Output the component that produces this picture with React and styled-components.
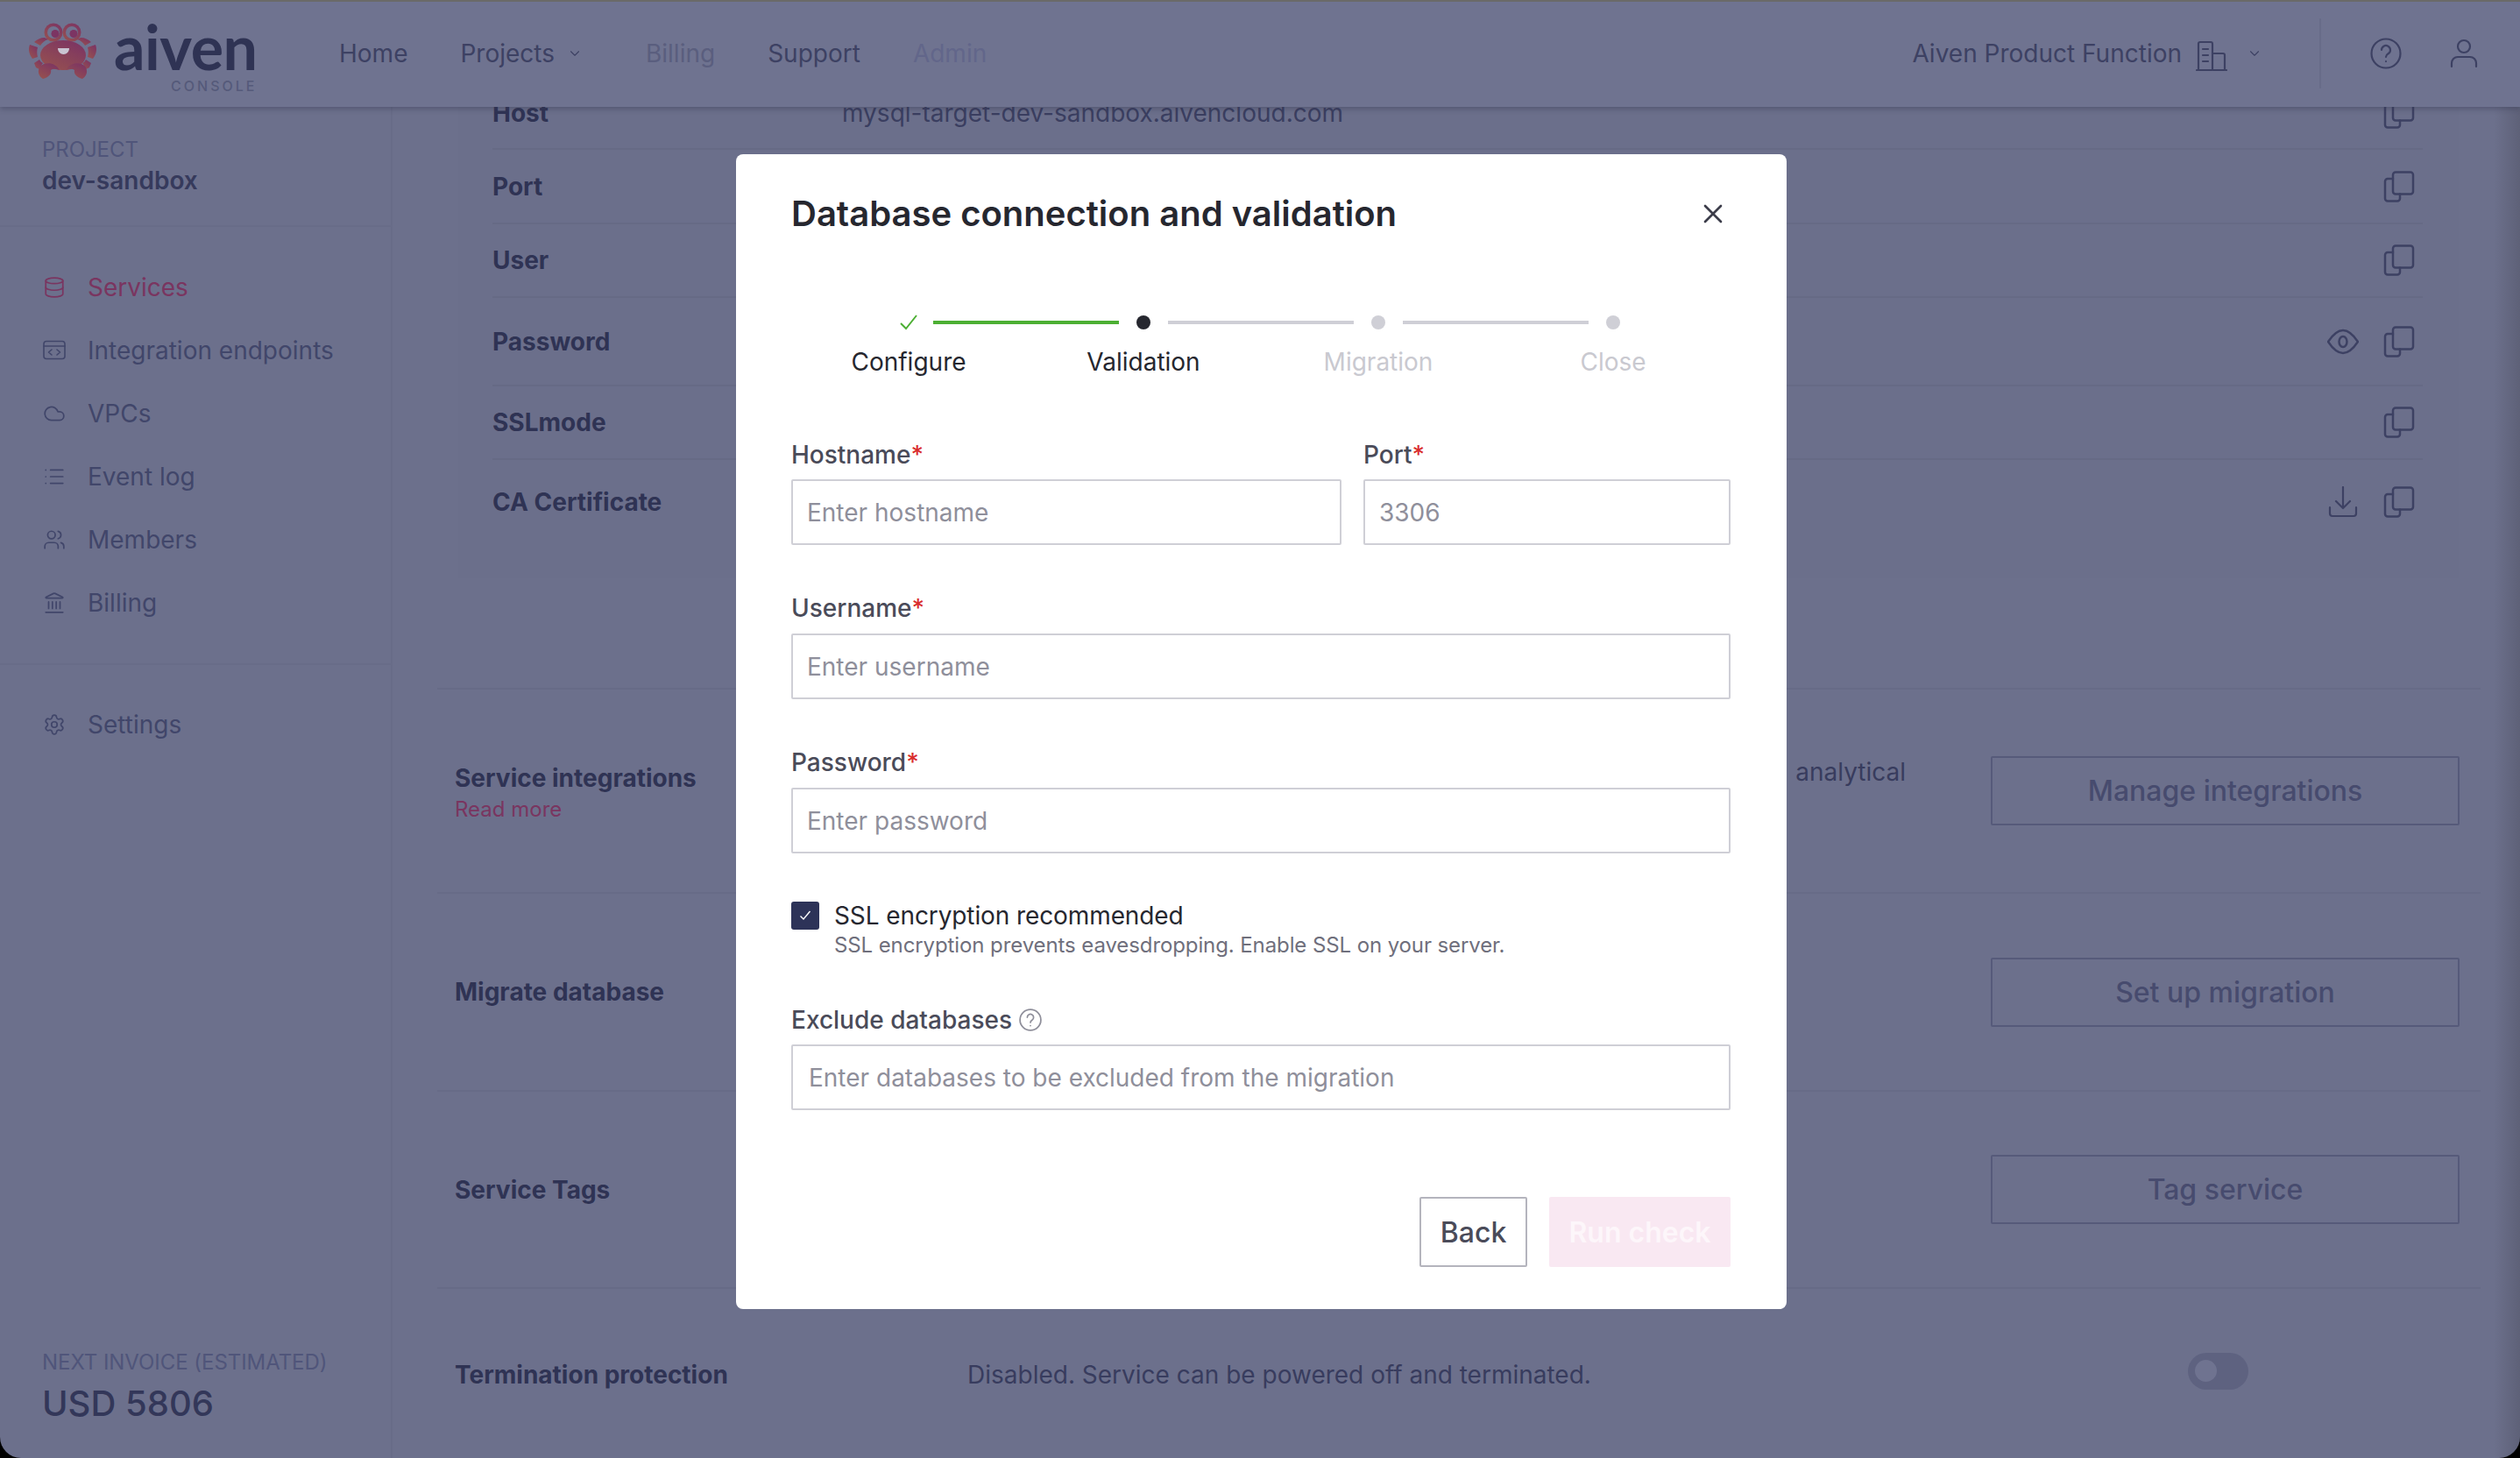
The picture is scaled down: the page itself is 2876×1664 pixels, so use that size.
import React from 'react';
import styled, { createGlobalStyle } from 'styled-components';
import { ChevronDown, Cloud, Database, Landmark, List, Settings, Users, X } from 'lucide-react';

const GlobalStyle = createGlobalStyle`
  html, body {
    margin: 0;
    padding: 0;
    background: #000;
  }
  body {
    font-family: "Inter", "Liberation Sans", sans-serif;
    color: #3a3e60;
  }
  * {
    box-sizing: border-box;
  }
`;

const Shell = styled.div`
  position: relative;
  width: 2876px;
  height: 1664px;
  overflow: hidden;
  display: flex;
  flex-direction: column;
  background: #6c708c;
  border-top: 2px solid #6a6a68;
  border-radius: 0 0 24px 24px;

  &::after {
    content: '';
    position: absolute;
    top: 0;
    right: 0;
    bottom: 0;
    width: 30px;
    background: linear-gradient(to right, rgba(80, 82, 100, 0), rgba(80, 82, 100, 0.5));
    pointer-events: none;
  }
`;

const TopBar = styled.header`
  position: relative;
  z-index: 2;
  flex: none;
  height: 120px;
  display: flex;
  align-items: center;
  padding: 0 47px 0 34px;
  background: #6f7390;
  box-shadow: 0 2px 6px rgba(50, 54, 80, 0.45);
`;

const Logo = styled.div`
  display: flex;
  align-items: flex-start;
  width: 353px;
  height: 100%;
`;

const CrabMark = styled.svg`
  margin: 22px 0 0 -4px;
`;

const Wordmark = styled.div`
  display: flex;
  flex-direction: column;
  align-items: flex-end;
  margin: 15px 0 0 16px;
  color: #2f3354;
`;

const WordmarkName = styled.span`
  font-family: "Lato", sans-serif;
  font-size: 70px;
  font-weight: 700;
  line-height: 72px;
  letter-spacing: -0.5px;
`;

const WordmarkSub = styled.span`
  font-size: 16px;
  font-weight: 500;
  line-height: 18px;
  letter-spacing: 3px;
  color: #555a7a;
`;

const TopNav = styled.nav`
  display: flex;
  align-items: center;
  flex: 1;
  margin-top: -2px;
`;

const TopLink = styled.a`
  display: flex;
  align-items: center;
  gap: 14px;
  margin-right: ${(p) => p.$gap}px;
  font-size: 28px;
  line-height: 36px;
  color: ${(p) => p.$color || '#3d4163'};
`;

const TopRight = styled.div`
  display: flex;
  align-items: center;
  height: 100%;
  margin-top: -2px;
  color: #3d4163;
`;

const OrgName = styled.span`
  font-size: 28px;
  line-height: 36px;
`;

const OrgIcon = styled.span`
  display: flex;
  margin: 6px 22px 0 16px;
`;

const TopDivider = styled.span`
  width: 2px;
  height: 80px;
  margin: 0 56px 0 65px;
  background: #686c89;
`;

const UserIcon = styled.span`
  display: flex;
  margin-left: 54px;
`;

const Body = styled.div`
  flex: 1;
  display: flex;
  min-height: 0;
`;

const Sidebar = styled.aside`
  flex: none;
  width: 448px;
  display: flex;
  flex-direction: column;
  border-right: 2px solid #686c88;
`;

const ProjectBlock = styled.div`
  height: 137px;
  padding: 32px 48px 0;
  border-bottom: 2px solid #686c88;
`;

const SmallCaps = styled.div`
  font-size: 24px;
  line-height: 34px;
  letter-spacing: -0.05px;
  color: #50557a;
`;

const ProjectName = styled.div`
  font-size: 28px;
  font-weight: 600;
  line-height: 36px;
  color: #363a5c;
`;

const SideGroup = styled.div`
  padding: ${(p) => p.$padding};
  border-bottom: ${(p) => (p.$divided ? '2px solid #686c88' : 'none')};
`;

const SideItem = styled.a`
  display: flex;
  align-items: center;
  gap: 25px;
  height: 72px;
  padding-left: 49px;
  font-size: 28px;
  color: ${(p) => (p.$active ? '#7a3560' : '#41466a')};
`;

const SideFooter = styled.div`
  margin-top: auto;
  padding: 0 48px 36px;
`;

const InvoiceAmount = styled.div`
  margin-top: 4px;
  font-size: 40px;
  font-weight: 500;
  line-height: 52px;
  color: #333759;
`;

const Main = styled.main`
  flex: 1;
  min-width: 0;
  overflow: hidden;
  padding: 0 45px 0 51px;
`;

const ConnectionCard = styled.section`
  margin: -34px 25px 125px 24px;
  padding: 0 41px 40px 39px;
  background: #6b6f8b;
`;

const ConnectionRow = styled.div`
  display: flex;
  align-items: center;
  height: ${(p) => p.$height}px;
  border-bottom: ${(p) => (p.$last ? 'none' : '2px solid #666a85')};
`;

const ConnectionLabel = styled.span`
  width: 399px;
  font-size: 28px;
  font-weight: 700;
  color: #2f3354;
`;

const ConnectionValue = styled.span`
  flex: 1;
  font-size: 28px;
  color: #3a3e60;
`;

const RowIcons = styled.span`
  display: flex;
  align-items: center;
  gap: 28px;
  margin-right: 9px;
  color: #3d4163;
`;

const Section = styled.section`
  display: flex;
  align-items: center;
  height: ${(p) => p.$height}px;
  padding: 0 24px 0 20px;
  border-top: ${(p) => (p.$first ? '2px solid #676b87' : 'none')};
  border-bottom: ${(p) => (p.$last ? 'none' : '2px solid #676b87')};
`;

const SectionTitleCol = styled.div`
  flex: none;
  width: 585px;
`;

const SectionTitle = styled.div`
  font-size: 28px;
  font-weight: 700;
  line-height: 36px;
  color: #2f3354;
`;

const ReadMore = styled.a`
  display: block;
  margin: 3px 0 -3px;
  font-size: 24px;
  line-height: 30px;
  color: #7a3560;
`;

const SectionText = styled.div`
  flex: 1;
  font-size: 28px;
  line-height: 36px;
  color: #383c5e;
  text-align: ${(p) => (p.$tail ? 'right' : 'left')};
  padding-right: ${(p) => (p.$tail ? '97px' : '0')};
  margin-bottom: ${(p) => (p.$tail ? '44px' : '0')};
`;

const SectionAction = styled.div`
  flex: none;
  width: 535px;
`;

const OutlineButton = styled.button`
  display: block;
  width: 100%;
  height: 79px;
  background: transparent;
  border: 2px solid #565a7a;
  border-radius: 2px;
  font-family: inherit;
  font-size: 32px;
  font-weight: 500;
  color: #474b6e;
`;

const Toggle = styled.span`
  display: block;
  width: 69px;
  height: 42px;
  margin: -8px 0 0 225px;
  padding: 8px;
  border-radius: 21px;
  background: #5e6280;

  &::before {
    content: '';
    display: block;
    width: 25px;
    height: 25px;
    border-radius: 50%;
    background: #6f7390;
  }
`;

const ModalLayer = styled.div`
  position: absolute;
  z-index: 3;
  inset: 0;
  display: flex;
  justify-content: center;
  align-items: flex-start;
  padding: 174px 1px 0 4px;
`;

const Modal = styled.div`
  width: 1199px;
  padding: 44px 64px 48px 63px;
  background: #fff;
  border-radius: 8px;
`;

const ModalHead = styled.div`
  display: flex;
  align-items: center;
  justify-content: space-between;
  margin-bottom: 92px;
`;

const ModalTitle = styled.h2`
  margin: 0;
  font-size: 40px;
  font-weight: 600;
  line-height: 48px;
  color: #26272f;
`;

const CloseButton = styled.span`
  display: flex;
  margin-right: 2px;
  color: #3c3d4a;
`;

const Stepper = styled.div`
  display: grid;
  grid-template-columns: repeat(4, 1fr);
  margin-bottom: 70px;
`;

const Step = styled.div`
  display: flex;
  flex-direction: column;
  align-items: center;
`;

const MarkerRow = styled.div`
  display: grid;
  grid-template-columns: 1fr 16px 1fr;
  grid-template-rows: 16px;
  column-gap: 20px;
  align-items: center;
  width: 100%;
  height: 16px;
`;

const Connector = styled.span`
  height: 4px;
  background: ${(p) => p.$color || 'transparent'};
`;

const Dot = styled.span`
  width: 16px;
  height: 16px;
  border-radius: 50%;
  background: ${(p) => p.$color};
`;

const StepCheck = styled.svg`
  width: 24px;
  height: 20px;
  margin: -2px 0 -2px -4px;
  color: #4caf33;
`;

const StepLabel = styled.div`
  margin-top: 19px;
  font-size: 28px;
  line-height: 36px;
  color: ${(p) => p.$color};
`;

const FieldRow = styled.div`
  display: flex;
  gap: 25px;
  margin-bottom: ${(p) => p.$gap}px;
`;

const Field = styled.div`
  flex: ${(p) => (p.$width ? 'none' : 1)};
  width: ${(p) => (p.$width ? `${p.$width}px` : 'auto')};
`;

const Label = styled.label`
  display: flex;
  align-items: center;
  gap: 8px;
  margin-bottom: ${(p) => p.$gap}px;
  font-size: 28px;
  font-weight: 500;
  line-height: 36px;
  color: #4a4b59;
`;

const Required = styled.span`
  margin-left: -8px;
  color: #d92d2d;
`;

const HintIcon = styled.span`
  display: flex;
  color: #8f8f9b;
`;

const Input = styled.input`
  display: block;
  width: 100%;
  height: 75px;
  padding: 0 ${(p) => p.$pad || 16}px;
  background: #fff;
  border: 2px solid #cfcfd6;
  border-radius: 2px;
  font-family: inherit;
  font-size: 28px;
  color: #26272f;

  &::placeholder {
    color: #8f8f9b;
    opacity: 1;
  }
`;

const CheckRow = styled.div`
  display: flex;
  gap: 17px;
  margin-bottom: 52px;
`;

const CheckBox = styled.span`
  flex: none;
  display: flex;
  align-items: center;
  justify-content: center;
  width: 32px;
  height: 32px;
  border-radius: 3px;
  background: #2d3358;
  color: #fff;
`;

const CheckTitle = styled.div`
  font-size: 28px;
  line-height: 32px;
  letter-spacing: -0.1px;
  color: #26272f;
`;

const CheckHint = styled.div`
  margin-top: 3px;
  font-size: 24px;
  line-height: 30px;
  letter-spacing: -0.1px;
  color: #6f6f7c;
`;

const ModalActions = styled.div`
  display: flex;
  justify-content: flex-end;
  gap: 25px;
  margin-top: 99px;
`;

const BackButton = styled.button`
  width: 123px;
  height: 80px;
  background: #fff;
  border: 2px solid #b4b4bd;
  border-radius: 2px;
  font-family: inherit;
  font-size: 32px;
  font-weight: 500;
  color: #4a4b59;
`;

const RunButton = styled.button`
  width: 207px;
  height: 80px;
  background: #f9e8f2;
  border: none;
  border-radius: 2px;
  font-family: inherit;
  font-size: 32px;
  font-weight: 600;
  color: #fdf6fa;
`;

const Glyph = ({ size = 36, stroke = 2.5, box = 36, children }) => (
  <svg width={size} height={size} viewBox={`0 0 ${box} ${box}`} fill="none" stroke="currentColor" strokeWidth={stroke} strokeLinecap="round" strokeLinejoin="round">
    {children}
  </svg>
);

const CopyIcon = () => (
  <Glyph>
    <rect x="11" y="1.5" width="23" height="25" rx="3" />
    <path d="M11 9H5a3 3 0 0 0-3 3v19.500a3 3 0 0 0 3 3h11a3 3 0 0 0 3-3V26.500" />
  </Glyph>
);

const EyeIcon = () => (
  <Glyph>
    <path d="M18 5c7 0 13 7 17 13-4 6-10 13-17 13S5 24 1 18C5 12 11 5 18 5Z" />
    <ellipse cx="18" cy="18" rx="4.5" ry="6" />
  </Glyph>
);

const DownloadIcon = () => (
  <Glyph stroke={2.2}>
    <path d="M18 1v24M10 17l8 8 8-8M3 24v7a3 3 0 0 0 3 3h24a3 3 0 0 0 3-3v-7" />
  </Glyph>
);

const EndpointIcon = () => (
  <Glyph size={26} box={26} stroke={1.6}>
    <rect x="1" y="2.5" width="24" height="20" rx="3" />
    <path d="M1 8h24M10 12l-3.500 3 3.500 3M16 12l3.500 3-3.500 3" />
  </Glyph>
);

const BuildingIcon = () => (
  <Glyph stroke={2.2}>
    <path d="M1 34h34M3 34V4a2 2 0 0 1 2-2h12a2 2 0 0 1 2 2v30M19 15h12a2 2 0 0 1 2 2v17M8 10h6M8 17h6M8 24h6" />
  </Glyph>
);

const HelpIcon = ({ size = 36, stroke = 2.2 }) => (
  <Glyph size={size} stroke={stroke}>
    <circle cx="18" cy="18" r="16.5" />
    <path d="M13 14a5 5 0 1 1 7.600 4.300c-1.600 1-2.600 2-2.600 3.700M18 27v.1" />
  </Glyph>
);

const PersonIcon = () => (
  <Glyph size={34} box={34} stroke={2.2}>
    <circle cx="17" cy="9" r="7" />
    <path d="M3 32v-4a7 7 0 0 1 7-7h14a7 7 0 0 1 7 7v4" />
  </Glyph>
);

const Crab = () => (
  <CrabMark width="84" height="68" viewBox="0 0 84 68">
    <defs>
      <linearGradient id="crabFill" x1="0.8" y1="0" x2="0.1" y2="1">
        <stop offset="0" stopColor="#7c3463" />
        <stop offset="1" stopColor="#97524f" />
      </linearGradient>
    </defs>
    <g fill="url(#crabFill)">
      <circle cx="31" cy="13" r="10.5" />
      <circle cx="52" cy="13" r="10.5" />
      <ellipse cx="42" cy="39" rx="26" ry="17" />
      <path d="M21 19c-5 0-9 2-12 5l7 4c2-3 5-6 9-7Z" />
      <path d="M62 19c5 0 9 2 12 5l-7 4c-2-3-5-6-9-7Z" />
      <path d="M4 27l9 3c-1 4-1 7 0 11l-6 2c-4-5-5-11-3-16Z" />
      <path d="M79 27l-9 3c1 4 1 7 0 11l6 2c4-5 5-11 3-16Z" />
      <path d="M9 48l6-4c1 2 2 3 4 4-2 2-3 5-2 8l-6-3Z" />
      <path d="M74 48l-6-4c-1 2-2 3-4 4 2 2 3 5 2 8l6-3Z" />
      <path d="M19 66C12 62 12 52 20 49c7-2 14 0 18 7-4-1-7-2-10 0 1 4-2 8-9 10Z" />
      <path d="M64 66c7-4 7-14-1-17-7-2-14 0-18 7 4-1 7-2 10 0-1 4 2 8 9 10Z" />
    </g>
    <circle cx="31" cy="13" r="7" fill="#6f7390" />
    <circle cx="52" cy="13" r="7" fill="#6f7390" />
    <circle cx="33" cy="14.5" r="4.5" fill="#7c3463" />
    <circle cx="54" cy="14.5" r="4.5" fill="#7c3463" />
    <path d="M36 31h13c0 4-3 7-6.500 7S36 35 36 31Z" fill="#c9c4d2" />
  </CrabMark>
);

const rows = [
  { label: 'Host', value: 'mysql-target-dev-sandbox.aivencloud.com', height: 83 },
  { label: 'Port', height: 85 },
  { label: 'User', height: 84 },
  { label: 'Password', height: 101, extra: <EyeIcon /> },
  { label: 'SSLmode', height: 84 },
  { label: 'CA Certificate', height: 95, extra: <DownloadIcon />, last: true },
];

const sideItems = [
  { label: 'Services', icon: <Database size={26} strokeWidth={1.6} />, active: true },
  { label: 'Integration endpoints', icon: <EndpointIcon /> },
  { label: 'VPCs', icon: <Cloud size={26} strokeWidth={1.6} /> },
  { label: 'Event log', icon: <List size={26} strokeWidth={1.6} /> },
  { label: 'Members', icon: <Users size={26} strokeWidth={1.6} /> },
  { label: 'Billing', icon: <Landmark size={26} strokeWidth={1.6} /> },
];

const GREEN = '#4caf33';
const GREY = '#cfcfd6';

export default function App() {
  return (
    <Shell>
      <GlobalStyle />
      <TopBar>
        <Logo>
          <Crab />
          <Wordmark>
            <WordmarkName>aiven</WordmarkName>
            <WordmarkSub>CONSOLE</WordmarkSub>
          </Wordmark>
        </Logo>
        <TopNav>
          <TopLink $gap={60}>Home</TopLink>
          <TopLink $gap={72}>
            Projects <ChevronDown size={18} strokeWidth={1.5} />
          </TopLink>
          <TopLink $gap={60} $color="#5a5e7e">Billing</TopLink>
          <TopLink $gap={60}>Support</TopLink>
          <TopLink $gap={0} $color="#62668a">Admin</TopLink>
        </TopNav>
        <TopRight>
          <OrgName>Aiven Product Function</OrgName>
          <OrgIcon><BuildingIcon /></OrgIcon>
          <ChevronDown size={18} strokeWidth={1.5} />
          <TopDivider />
          <HelpIcon />
          <UserIcon><PersonIcon /></UserIcon>
        </TopRight>
      </TopBar>
      <Body>
        <Sidebar>
          <ProjectBlock>
            <SmallCaps>PROJECT</SmallCaps>
            <ProjectName>dev-sandbox</ProjectName>
          </ProjectBlock>
          <SideGroup $padding="33px 0 33px" $divided>
            {sideItems.map((item) => (
              <SideItem key={item.label} $active={item.active}>
                {item.icon}
                {item.label}
              </SideItem>
            ))}
          </SideGroup>
          <SideGroup $padding="32px 0 0">
            <SideItem>
              <Settings size={26} strokeWidth={1.6} />
              Settings
            </SideItem>
          </SideGroup>
          <SideFooter>
            <SmallCaps>NEXT INVOICE (ESTIMATED)</SmallCaps>
            <InvoiceAmount>USD 5806</InvoiceAmount>
          </SideFooter>
        </Sidebar>
        <Main>
          <ConnectionCard>
            {rows.map((row) => (
              <ConnectionRow key={row.label} $height={row.height} $last={row.last}>
                <ConnectionLabel>{row.label}</ConnectionLabel>
                <ConnectionValue>{row.value}</ConnectionValue>
                <RowIcons>
                  {row.extra}
                  <CopyIcon />
                </RowIcons>
              </ConnectionRow>
            ))}
          </ConnectionCard>
          <Section $height={235} $first>
            <SectionTitleCol>
              <SectionTitle>Service integrations</SectionTitle>
              <ReadMore>Read more</ReadMore>
            </SectionTitleCol>
            <SectionText $tail>analytical</SectionText>
            <SectionAction><OutlineButton>Manage integrations</OutlineButton></SectionAction>
          </Section>
          <Section $height={226}>
            <SectionTitleCol><SectionTitle>Migrate database</SectionTitle></SectionTitleCol>
            <SectionText />
            <SectionAction><OutlineButton>Set up migration</OutlineButton></SectionAction>
          </Section>
          <Section $height={225}>
            <SectionTitleCol><SectionTitle>Service Tags</SectionTitle></SectionTitleCol>
            <SectionText />
            <SectionAction><OutlineButton>Tag service</OutlineButton></SectionAction>
          </Section>
          <Section $height={196} $last>
            <SectionTitleCol><SectionTitle>Termination protection</SectionTitle></SectionTitleCol>
            <SectionText>Disabled. Service can be powered off and terminated.</SectionText>
            <SectionAction><Toggle /></SectionAction>
          </Section>
        </Main>
      </Body>
      <ModalLayer>
        <Modal>
          <ModalHead>
            <ModalTitle>Database connection and validation</ModalTitle>
            <CloseButton><X size={36} strokeWidth={1.8} /></CloseButton>
          </ModalHead>
          <Stepper>
            <Step>
              <MarkerRow>
                <Connector />
                <StepCheck viewBox="0 0 24 20" fill="none" stroke="currentColor" strokeWidth="2">
                  <path d="M3 11l6 6L21 2" />
                </StepCheck>
                <Connector $color={GREEN} />
              </MarkerRow>
              <StepLabel $color="#26272f">Configure</StepLabel>
            </Step>
            <Step>
              <MarkerRow>
                <Connector $color={GREEN} />
                <Dot $color="#26272f" />
                <Connector $color={GREY} />
              </MarkerRow>
              <StepLabel $color="#26272f">Validation</StepLabel>
            </Step>
            <Step>
              <MarkerRow>
                <Connector $color={GREY} />
                <Dot $color={GREY} />
                <Connector $color={GREY} />
              </MarkerRow>
              <StepLabel $color="#c9c9d0">Migration</StepLabel>
            </Step>
            <Step>
              <MarkerRow>
                <Connector $color={GREY} />
                <Dot $color={GREY} />
                <Connector />
              </MarkerRow>
              <StepLabel $color="#c9c9d0">Close</StepLabel>
            </Step>
          </Stepper>
          <FieldRow $gap={54}>
            <Field>
              <Label $gap={10}>Hostname<Required>*</Required></Label>
              <Input placeholder="Enter hostname" readOnly />
            </Field>
            <Field $width={419}>
              <Label $gap={10}>Port<Required>*</Required></Label>
              <Input placeholder="3306" readOnly />
            </Field>
          </FieldRow>
          <FieldRow $gap={54}>
            <Field>
              <Label $gap={11}>Username<Required>*</Required></Label>
              <Input placeholder="Enter username" readOnly />
            </Field>
          </FieldRow>
          <FieldRow $gap={55}>
            <Field>
              <Label $gap={11}>Password<Required>*</Required></Label>
              <Input placeholder="Enter password" readOnly />
            </Field>
          </FieldRow>
          <CheckRow>
            <CheckBox>
              <svg width="16" height="16" viewBox="0 0 16 16" fill="none" stroke="currentColor" strokeWidth="1.4">
                <path d="M2.500 8.500l3.500 3.500 7.500-9" />
              </svg>
            </CheckBox>
            <div>
              <CheckTitle>SSL encryption recommended</CheckTitle>
              <CheckHint>SSL encryption prevents eavesdropping. Enable SSL on your server.</CheckHint>
            </div>
          </CheckRow>
          <Field>
            <Label $gap={10}>
              Exclude databases
              <HintIcon><HelpIcon size={26} stroke={2.4} /></HintIcon>
            </Label>
            <Input $pad={18} placeholder="Enter databases to be excluded from the migration" readOnly />
          </Field>
          <ModalActions>
            <BackButton>Back</BackButton>
            <RunButton>Run check</RunButton>
          </ModalActions>
        </Modal>
      </ModalLayer>
    </Shell>
  );
}
